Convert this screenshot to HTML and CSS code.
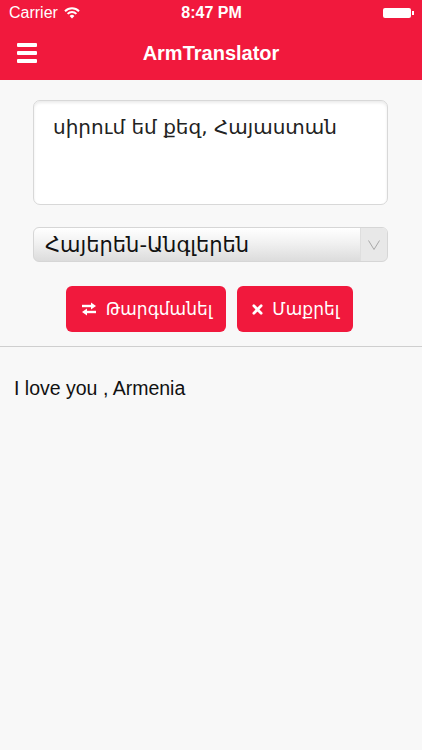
FILE: index.html
```html
<!DOCTYPE html>
<html lang="hy">
<head>
    <meta charset="UTF-8">
    <meta name="viewport" content="width=device-width, initial-scale=1.0">
    <title>ArmTranslator</title>
    <link rel="stylesheet" href="styles.css">
</head>
<body>
    <div class="top">
        <div class="status">
            <div class="carrier">
                Carrier
                <svg class="wifi" width="16" height="12" viewBox="0 0 16 12">
                    <path d="M1 4.2a10 10 0 0 1 14 0" fill="none" stroke="#fff" stroke-width="2"/>
                    <path d="M3.6 6.9a6.2 6.2 0 0 1 8.8 0" fill="none" stroke="#fff" stroke-width="2"/>
                    <path d="M8 11.5l-2.4-2.6a3.4 3.4 0 0 1 4.8 0z" fill="#fff"/>
                </svg>
            </div>
            <div class="time">8:47 PM</div>
            <div class="battery"><span class="cell"></span><span class="tip"></span></div>
        </div>
        <div class="nav">
            <div class="menu"><span></span><span></span><span></span></div>
            <div class="title">ArmTranslator</div>
        </div>
    </div>

    <div class="form">
        <div class="source">սիրում եմ քեզ, Հայաստան</div>
        <div class="select">
            <div class="select-text">Հայերեն-Անգլերեն</div>
            <div class="select-arrow">
                <svg width="12" height="10" viewBox="0 0 12 10">
                    <path d="M0.5 0.5l5.5 9 5.5-9" fill="none" stroke="#a8a8a8" stroke-width="1"/>
                </svg>
            </div>
        </div>
        <div class="buttons">
            <button class="btn">
                <svg width="16" height="14" viewBox="0 0 16 14">
                    <path d="M1 4h10" stroke="#fff" stroke-width="2.4"/>
                    <path d="M10 0.5l5 3.5-5 3.5z" fill="#fff"/>
                    <path d="M15 10H5" stroke="#fff" stroke-width="2.4"/>
                    <path d="M6 6.5l-5 3.5 5 3.5z" fill="#fff"/>
                </svg>
                Թարգմանել
            </button>
            <button class="btn">
                <svg width="11" height="11" viewBox="0 0 12 12">
                    <path d="M2 2l8 8M10 2l-8 8" stroke="#fff" stroke-width="3" stroke-linecap="round"/>
                </svg>
                Մաքրել
            </button>
        </div>
    </div>

    <div class="result">I love you , Armenia</div>
</body>
</html>
```

FILE: styles.css
```css
body {
    margin: 0;
    background: #f8f8f8;
    font-family: "Liberation Sans", Arial, sans-serif;
    height: 750px;
    overflow: hidden;
}

.top {
    background: #f1193d;
    color: #fff;
}

.status {
    height: 26px;
    display: flex;
    align-items: center;
    justify-content: space-between;
    padding: 0 8px 0 9px;
    font-size: 16px;
}

.carrier {
    display: flex;
    align-items: center;
    gap: 6px;
    width: 120px;
}

.time {
    font-weight: bold;
}

.battery {
    width: 120px;
    display: flex;
    justify-content: flex-end;
    align-items: center;
}

.battery .cell {
    width: 28px;
    height: 10px;
    background: #fff;
    border-radius: 2px;
}

.battery .tip {
    width: 2px;
    height: 4px;
    margin-left: 1px;
    background: #fff;
}

.nav {
    height: 54px;
    display: flex;
    align-items: center;
    position: relative;
}

.menu {
    margin-left: 17px;
    width: 20px;
    display: flex;
    flex-direction: column;
    gap: 4px;
}

.menu span {
    height: 4px;
    background: #fff;
    border-radius: 1px;
}

.title {
    position: absolute;
    left: 0;
    right: 0;
    text-align: center;
    font-size: 20px;
    font-weight: bold;
    pointer-events: none;
}

.form {
    padding: 20px 34px 14px 33px;
    border-bottom: 1px solid #cfcfcf;
}

.source {
    height: 105px;
    box-sizing: border-box;
    background: #fff;
    border: 1px solid #d8d8d8;
    border-radius: 7px;
    box-shadow: inset 0 2px 3px rgba(0, 0, 0, 0.08);
    padding: 14px 19px;
    font-family: "DejaVu Sans", sans-serif;
    font-size: 20px;
    color: #222;
}

.select {
    margin-top: 22px;
    height: 35px;
    display: flex;
    border-radius: 6px;
    border: 1px solid #d6d6d6;
    background: linear-gradient(#ffffff, #f1f1f1 45%, #dcdcdc);
    overflow: hidden;
    box-sizing: border-box;
}

.select-text {
    flex: 1;
    padding-left: 11px;
    display: flex;
    align-items: center;
    font-family: "DejaVu Sans", sans-serif;
    font-size: 21px;
    color: #111;
}

.select-arrow {
    width: 26px;
    background: #e8e8e8;
    border-left: 1px solid #dedede;
    display: flex;
    align-items: center;
    justify-content: center;
}

.buttons {
    margin-top: 24px;
    display: flex;
    justify-content: center;
    gap: 11px;
    padding-right: 2px;
}

.btn {
    height: 46px;
    border: none;
    border-radius: 6px;
    background: #f1193d;
    color: #fff;
    font-family: "DejaVu Sans", sans-serif;
    font-size: 17px;
    display: flex;
    align-items: center;
    gap: 9px;
    padding: 0 14px 0 15px;
}

.result {
    padding: 30px 14px;
    font-size: 19.5px;
    color: #111;
}
```
